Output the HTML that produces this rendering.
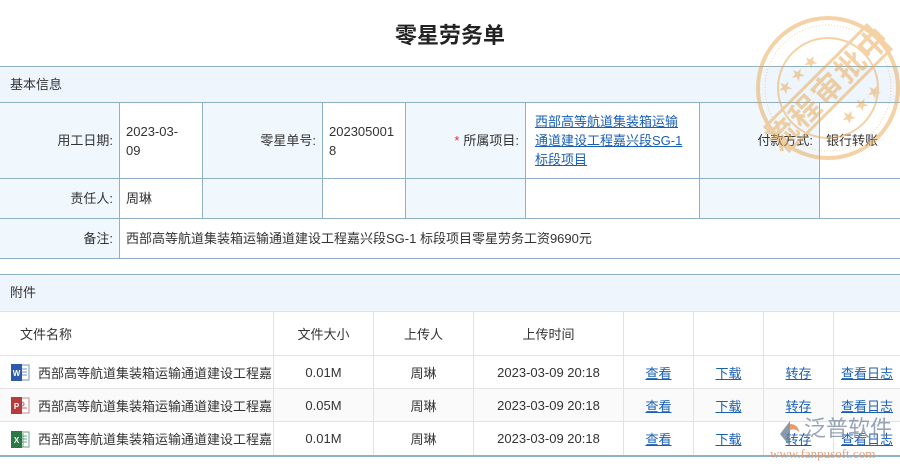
<!DOCTYPE html>
<html><head><meta charset="utf-8">
<style>
*{margin:0;padding:0;box-sizing:border-box}
body{width:900px;height:464px;overflow:hidden;background:#fff;font-family:"Liberation Sans","Noto Sans CJK SC",sans-serif;font-size:13px;color:#333;position:relative}
.title{position:absolute;top:22px;left:0;width:900px;text-align:center;font-size:22px;font-weight:bold;color:#222;line-height:28px}
.abs{position:absolute}
.c{position:absolute;border-right:1px solid #8fb0c5;border-bottom:1px solid #8fb0c5;line-height:19px;padding:0 6px}
.lab{background:#f0f7fd;text-align:right;display:flex;align-items:center;justify-content:flex-end;padding-right:6px}
.val{background:#fff;display:flex;align-items:center}
a{color:#1a5fb4;text-decoration:underline}
.t{position:absolute;border-right:1px solid #e2e2e2;border-bottom:1px solid #e2e2e2;display:flex;align-items:center;justify-content:center}
</style></head><body>
<div class="title">零星劳务单</div>

<div class="abs" style="left:0;top:66px;width:900px;height:37px;background:#eef5fc;border-top:1px solid #8fb0c5;border-bottom:1px solid #8fb0c5;padding-left:10px;line-height:35px">基本信息</div>

<div class="c lab" style="left:0;top:103px;width:120px;height:76px">用工日期:</div>
<div class="c val" style="left:120px;top:103px;width:83px;height:76px">2023-03-<br>09</div>
<div class="c lab" style="left:203px;top:103px;width:120px;height:76px">零星单号:</div>
<div class="c val" style="left:323px;top:103px;width:83px;height:76px">202305001<br>8</div>
<div class="c lab" style="left:406px;top:103px;width:120px;height:76px"><span style="color:#d33;margin-right:4px">*</span>所属项目:</div>
<div class="c val" style="left:526px;top:103px;width:174px;height:76px;padding-left:9px"><a>西部高等航道集装箱运输<br>通道建设工程嘉兴段SG-1<br>标段项目</a></div>
<div class="c lab" style="left:700px;top:103px;width:120px;height:76px">付款方式:</div>
<div class="c val" style="left:820px;top:103px;width:80px;height:76px;border-right:none">银行转账</div>

<div class="c lab" style="left:0;top:179px;width:120px;height:40px">责任人:</div>
<div class="c val" style="left:120px;top:179px;width:83px;height:40px">周琳</div>
<div class="c lab" style="left:203px;top:179px;width:120px;height:40px"></div>
<div class="c val" style="left:323px;top:179px;width:83px;height:40px"></div>
<div class="c lab" style="left:406px;top:179px;width:120px;height:40px"></div>
<div class="c val" style="left:526px;top:179px;width:174px;height:40px"></div>
<div class="c lab" style="left:700px;top:179px;width:120px;height:40px"></div>
<div class="c val" style="left:820px;top:179px;width:80px;height:40px;border-right:none"></div>

<div class="c lab" style="left:0;top:219px;width:120px;height:40px">备注:</div>
<div class="c val" style="left:120px;top:219px;width:780px;height:40px;border-right:none">西部高等航道集装箱运输通道建设工程嘉兴段SG-1 标段项目零星劳务工资9690元</div>

<div class="abs" style="left:0;top:274px;width:900px;height:38px;background:#eef5fc;border-top:1px solid #8fb0c5;border-bottom:1px solid #e2e2e2;padding-left:10px;line-height:36px">附件</div>

<div class="t" style="left:0;top:312px;width:274px;height:44px;justify-content:flex-start;padding-left:20px">文件名称</div>
<div class="t" style="left:274px;top:312px;width:100px;height:44px">文件大小</div>
<div class="t" style="left:374px;top:312px;width:100px;height:44px">上传人</div>
<div class="t" style="left:474px;top:312px;width:150px;height:44px">上传时间</div>
<div class="t" style="left:624px;top:312px;width:70px;height:44px"></div>
<div class="t" style="left:694px;top:312px;width:70px;height:44px"></div>
<div class="t" style="left:764px;top:312px;width:70px;height:44px"></div>
<div class="t" style="left:834px;top:312px;width:66px;height:44px;border-right:none"></div>

<div class="abs" style="left:0;top:356px;width:900px;height:33px;background:#fff"></div>
<div class="abs" style="left:0;top:389px;width:900px;height:33px;background:#fafafa"></div>
<div class="abs" style="left:0;top:422px;width:900px;background:#fff;border-bottom:2px solid #8fb0c5;height:35px"></div>

<div class="t" style="left:0;top:356px;width:274px;height:33px;justify-content:flex-start;padding-left:10px">
<svg width="20" height="20" viewBox="0 0 20 20" style="margin-right:8px"><rect x="7" y="3" width="12" height="15" fill="#fff" stroke="#7a94bb"/><path d="M10 7h7M10 10h7M10 13h7" stroke="#7a94bb"/><rect x="1" y="2" width="11" height="17" fill="#2d5aa8"/><text x="6.5" y="14" font-size="8" font-weight="bold" fill="#fff" text-anchor="middle" font-family="Liberation Sans">W</text></svg>西部高等航道集装箱运输通道建设工程嘉</div>
<div class="t" style="left:274px;top:356px;width:100px;height:33px">0.01M</div>
<div class="t" style="left:374px;top:356px;width:100px;height:33px">周琳</div>
<div class="t" style="left:474px;top:356px;width:150px;height:33px">2023-03-09 20:18</div>
<div class="t" style="left:624px;top:356px;width:70px;height:33px"><a>查看</a></div>
<div class="t" style="left:694px;top:356px;width:70px;height:33px"><a>下载</a></div>
<div class="t" style="left:764px;top:356px;width:70px;height:33px"><a>转存</a></div>
<div class="t" style="left:834px;top:356px;width:66px;height:33px;border-right:none"><a>查看日志</a></div>

<div class="t" style="left:0;top:389px;width:274px;height:33px;justify-content:flex-start;padding-left:10px">
<svg width="20" height="20" viewBox="0 0 20 20" style="margin-right:8px"><rect x="7" y="3" width="12" height="15" fill="#fff" stroke="#c98a8a"/><path d="M12 7a2 2 0 1 0 0.1 0M10 13h7" stroke="#c06060" fill="none"/><rect x="1" y="2" width="11" height="17" fill="#b83b3b"/><text x="6.5" y="14" font-size="8" font-weight="bold" fill="#fff" text-anchor="middle" font-family="Liberation Sans">P</text></svg>西部高等航道集装箱运输通道建设工程嘉</div>
<div class="t" style="left:274px;top:389px;width:100px;height:33px">0.05M</div>
<div class="t" style="left:374px;top:389px;width:100px;height:33px">周琳</div>
<div class="t" style="left:474px;top:389px;width:150px;height:33px">2023-03-09 20:18</div>
<div class="t" style="left:624px;top:389px;width:70px;height:33px"><a>查看</a></div>
<div class="t" style="left:694px;top:389px;width:70px;height:33px"><a>下载</a></div>
<div class="t" style="left:764px;top:389px;width:70px;height:33px"><a>转存</a></div>
<div class="t" style="left:834px;top:389px;width:66px;height:33px;border-right:none"><a>查看日志</a></div>

<div class="t" style="left:0;top:422px;width:274px;height:33px;justify-content:flex-start;padding-left:10px;border-bottom:none">
<svg width="20" height="20" viewBox="0 0 20 20" style="margin-right:8px"><rect x="7" y="3" width="12" height="15" fill="#fff" stroke="#6aa57f"/><path d="M10 7h7M10 10h7M10 13h7M13 4v14" stroke="#6aa57f"/><rect x="1" y="2" width="11" height="17" fill="#2a7a46"/><text x="6.5" y="14" font-size="8" font-weight="bold" fill="#fff" text-anchor="middle" font-family="Liberation Sans">X</text></svg>西部高等航道集装箱运输通道建设工程嘉</div>
<div class="t" style="left:274px;top:422px;width:100px;height:33px;border-bottom:none">0.01M</div>
<div class="t" style="left:374px;top:422px;width:100px;height:33px;border-bottom:none">周琳</div>
<div class="t" style="left:474px;top:422px;width:150px;height:33px;border-bottom:none">2023-03-09 20:18</div>
<div class="t" style="left:624px;top:422px;width:70px;height:33px;border-bottom:none"><a>查看</a></div>
<div class="t" style="left:694px;top:422px;width:70px;height:33px;border-bottom:none"><a>下载</a></div>
<div class="t" style="left:764px;top:422px;width:70px;height:33px;border-bottom:none"><a>转存</a></div>
<div class="t" style="left:834px;top:422px;width:66px;height:33px;border-right:none;border-bottom:none"><a>查看日志</a></div>

<div class="abs" style="left:770px;top:414px;width:130px;height:50px;pointer-events:none;white-space:nowrap">
<svg width="22" height="26" viewBox="0 0 22 26" style="position:absolute;left:8px;top:6px"><path d="M12 1L2 14l8 10 2-8z" fill="#6f7f95" opacity="0.8"/><path d="M12 4c6 0 9 4 9 8-3-3-6-3-9-2z" fill="#e88a55" opacity="0.85"/></svg>
<div style="position:absolute;left:34px;top:1px;font-size:22px;color:#7f8fa6;opacity:0.8;line-height:28px;white-space:nowrap">泛普软件</div>
<div style="position:absolute;left:0;top:32px;font-family:'Liberation Serif',serif;font-size:13px;color:#e3966a;opacity:0.9;white-space:nowrap">www.fanpusoft.com</div>
</div>

<svg class="abs" style="left:752px;top:12px;opacity:0.5" width="152" height="152" viewBox="-76 -76 152 152">
<circle r="70" fill="none" stroke="#eaa74e" stroke-width="4"/>
<circle r="63" fill="none" stroke="#eaa74e" stroke-width="1" stroke-dasharray="1 2"/>
<circle r="50" fill="none" stroke="#eaa74e" stroke-width="2"/>
<g transform="rotate(-45)">
<rect x="-72" y="-17" width="144" height="34" fill="none" stroke="#eaa74e" stroke-width="3"/>
<text x="0" y="11" text-anchor="middle" font-size="30" font-weight="bold" fill="#eaa74e" font-family="Noto Sans CJK SC,sans-serif" letter-spacing="2">流程审批中</text>
<text x="-12" y="-26" font-size="14" fill="#eaa74e" text-anchor="middle">★ ★ ★</text>
<text x="12" y="40" font-size="14" fill="#eaa74e" text-anchor="middle">★ ★ ★</text>
</g>
</svg>
</body></html>
